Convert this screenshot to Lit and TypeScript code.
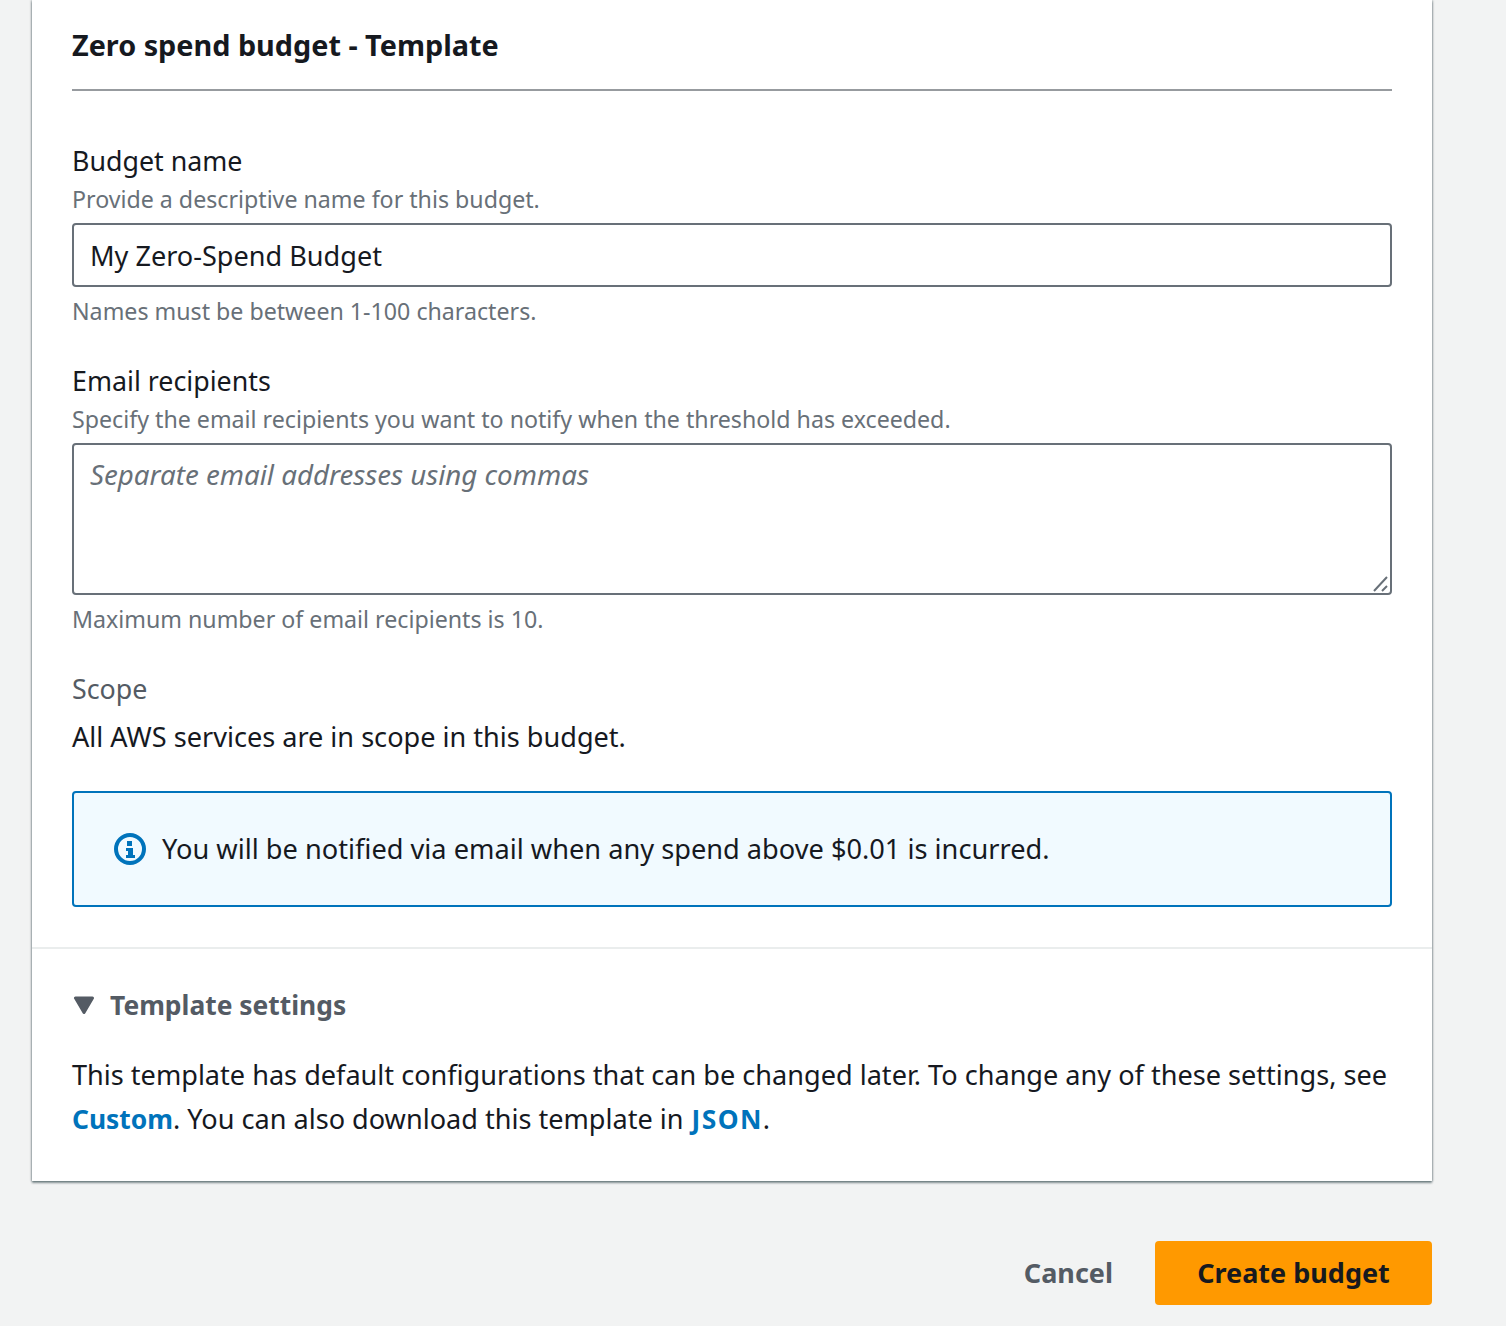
import { LitElement, html, css } from "lit";
import { customElement } from "lit/decorators.js";

@customElement("app-root")
export class AppRoot extends LitElement {
  static styles = css`
    :host { display: block; width: 1506px; height: 1326px; overflow: hidden; background: #f2f3f3; font-family: "Noto Sans", sans-serif; color: #16191f; font-size: 27.1px; line-height: 44px; }
    * { box-sizing: border-box; }
    .card { margin: 0 74px 0 32px; height: 1181px; background: #fff; box-shadow: 0 2px 2px rgba(0,28,36,.45), 1px 0 2px rgba(0,28,36,.25), -1px 0 2px rgba(0,28,36,.25); display: flex; flex-direction: column; }
    .body { padding: 25px 40px 0; }
    h2 { margin: 0; height: 66px; border-bottom: 2px solid #979b9f; font-size: 28.8px; font-weight: 700; line-height: 40px; }
    .field { display: flex; flex-direction: column; }
    .name { margin-top: 50px; }
    .next { margin-top: 32px; }
    .label { line-height: 40px; font-size: 26.8px; }
    .muted { color: #545b64; }
    .desc { color: #687078; font-size: 23.2px; line-height: 36px; }
    .box { border: 2px solid #687078; border-radius: 4px; background: #fff; padding: 0 16px; font-size: 27.1px; }
    .input { height: 64px; line-height: 62px; margin-top: 6px; color: #16191f; }
    .area { height: 152px; margin-top: 6px; line-height: 58px; position: relative; font-style: italic; color: #687078; font-size: 27.7px; }
    .grip { position: absolute; right: 0; bottom: 0; width: 18px; height: 18px; }
    .c1 { margin-top: 6px; }
    .scope { margin-top: 6px; }
    .alert { margin-top: 32px; height: 116px; border: 2px solid #0073bb; border-radius: 4px; background: #f1faff; display: flex; align-items: center; gap: 16px; padding-left: 40px; font-size: 27.2px; }
    .rule { height: 2px; background: #eaeded; margin-top: 40px; }
    .foot { padding: 34px 40px 0; }
    .summary { display: flex; align-items: center; gap: 14px; color: #545b64; font-weight: 700; font-size: 26.4px; line-height: 44px; }
    .para { margin: 26px 0 0; font-size: 27.1px; }
    .para a { color: #0073bb; font-weight: 700; font-size: 26.4px; text-decoration: none; }
    .para a.json { letter-spacing: 1.4px; margin-left: 1px; }
    .actions { display: flex; justify-content: flex-end; align-items: center; gap: 42px; margin: 60px 74px 0 0; }
    .cancel { color: #545b64; font-weight: 700; font-size: 27px; }
    .primary { width: 277px; height: 64px; border-radius: 4px; background: #ff9900; display: flex; align-items: center; justify-content: center; font-weight: 700; font-size: 27px; }
  `;

  render() {
    return html`
      <div class="card">
        <div class="body">
          <h2>Zero spend budget - Template</h2>
          <div class="field name">
            <div class="label">Budget name</div>
            <div class="desc">Provide a descriptive name for this budget.</div>
            <div class="box input">My Zero-Spend Budget</div>
            <div class="desc c1">Names must be between 1-100 characters.</div>
          </div>
          <div class="field next">
            <div class="label">Email recipients</div>
            <div class="desc">Specify the email recipients you want to notify when the threshold has exceeded.</div>
            <div class="box area">Separate email addresses using commas
              <svg class="grip" viewBox="0 0 18 18" fill="none" stroke="#687078" stroke-width="2"><path d="M2 16 15 2M10 16l5-5"/></svg>
            </div>
            <div class="desc c1">Maximum number of email recipients is 10.</div>
          </div>
          <div class="field next">
            <div class="label muted">Scope</div>
            <div class="scope">All AWS services are in scope in this budget.</div>
          </div>
          <div class="alert">
            <svg width="32" height="32" viewBox="0 0 32 32" fill="none"><circle cx="16" cy="16" r="14" stroke="#0073bb" stroke-width="4"/><path fill="#0073bb" d="M13 8h5v5h-5zM12 15h7v7h2v3H12v-3h2v-4h-2z"/></svg>
            <span>You will be notified via email when any spend above $0.01 is incurred.</span>
          </div>
        </div>
        <div class="rule"></div>
        <div class="foot">
          <div class="summary">
            <svg width="24" height="18" viewBox="0 0 24 18"><path fill="#545b64" d="M3.5 2h17L12 16.500z" stroke="#545b64" stroke-width="3" stroke-linejoin="round"/></svg>
            <span>Template settings</span>
          </div>
          <p class="para">This template has default configurations that can be changed later. To change any of these settings, see <a>Custom</a>. You can also download this template in <a class="json">JSON</a>.</p>
        </div>
      </div>
      <div class="actions">
        <span class="cancel">Cancel</span>
        <div class="primary">Create budget</div>
      </div>
    `;
  }
}
